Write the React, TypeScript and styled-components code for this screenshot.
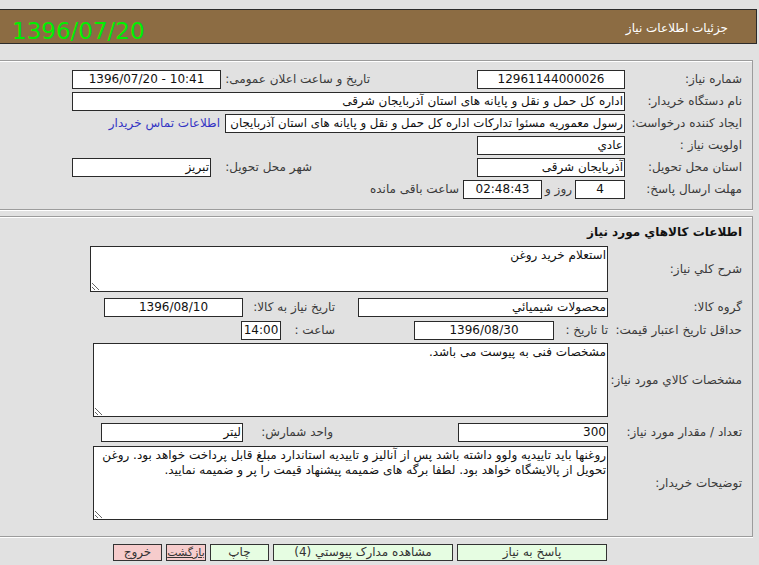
import React from "react";
import styled, { createGlobalStyle } from "styled-components";

const GlobalStyle = createGlobalStyle`
  html, body { margin: 0; padding: 0; background: #e1e1e1; }
  body {
    font-family: "DejaVu Sans", "Noto Sans", sans-serif;
    font-size: 12px;
    color: #3a3a3a;
  }
`;

const Page = styled.div`
  width: 759px;
  height: 565px;
  overflow: hidden;
  box-sizing: border-box;
  padding-top: 9px;
  display: flex;
  flex-direction: column;
`;

const Header = styled.header`
  height: 35px;
  box-sizing: border-box;
  margin-right: 2px;
  background: #8c6c43;
  border: 1px solid #2b2b2b;
  border-left: none;
  display: flex;
  direction: rtl;
  align-items: center;
  justify-content: space-between;
`;

const HeaderTitle = styled.div`
  color: #ffffff;
  font-size: 12px;
  padding-right: 28px;
  padding-top: 3px;
`;

const HeaderDate = styled.div`
  color: #00f000;
  font-size: 23px;
  padding-left: 12px;
  padding-top: 9px;
  direction: ltr;
`;

const Panel = styled.section<{ $mt: number; $pt: number; $pb: number }>`
  margin-top: ${(p) => p.$mt}px;
  margin-right: 6px;
  border: 1px solid #9c9c9c;
  border-left: none;
  box-shadow: 0 1px 0 #ffffff, inset 0 1px 0 #ffffff;
  direction: rtl;
  padding: ${(p) => p.$pt}px 10px ${(p) => p.$pb}px 0;
  display: flex;
  flex-direction: column;
`;

const Row = styled.div<{ $h: number; $mt?: number }>`
  display: flex;
  align-items: center;
  height: ${(p) => p.$h}px;
  margin-top: ${(p) => p.$mt ?? 0}px;
`;

const Label = styled.div<{ $w: number }>`
  width: ${(p) => p.$w}px;
  flex: none;
  white-space: nowrap;
  color: #3a3a3a;
`;

const Title = styled.div`
  height: 16px;
  line-height: 16px;
  font-weight: bold;
  color: #111;
  white-space: nowrap;
`;

const Field = styled.div<{ $w: number; $center?: boolean; $fs?: number }>`
  width: ${(p) => p.$w}px;
  height: 19px;
  flex: none;
  box-sizing: border-box;
  border: 1px solid #2a2a2a;
  background: #ffffff;
  color: #111;
  font-size: ${(p) => p.$fs ?? 12}px;
  line-height: 17px;
  padding: 0 1px;
  text-align: ${(p) => (p.$center ? "center" : "right")};
  direction: ${(p) => (p.$center ? "ltr" : "rtl")};
  white-space: nowrap;
  overflow: hidden;
`;

const InlineLabel = styled.span<{ $w?: number; $pr?: number; $pl?: number }>`
  ${(p) => (p.$w ? `width: ${p.$w}px;` : "")}
  padding-right: ${(p) => p.$pr ?? 0}px;
  padding-left: ${(p) => p.$pl ?? 0}px;
  box-sizing: border-box;
  flex: none;
  white-space: nowrap;
  color: #3a3a3a;
`;

const ContactLink = styled.a`
  color: #3434c4;
  text-decoration: none;
  margin-right: 5px;
  white-space: nowrap;
  cursor: pointer;
`;

const TextBox = styled.textarea<{ $w: number; $h: number }>`
  width: ${(p) => p.$w}px;
  height: ${(p) => p.$h}px;
  flex: none;
  box-sizing: border-box;
  border: 1px solid #2a2a2a;
  background: #ffffff;
  color: #111;
  font-family: "DejaVu Sans", "Noto Sans", sans-serif;
  font-size: 12px;
  line-height: 15px;
  padding: 1px 1px;
  margin: 0;
  direction: rtl;
  text-align: right;
  resize: both;
  overflow: hidden;
  outline: none;
`;

const ButtonBar = styled.div`
  display: flex;
  direction: rtl;
  gap: 4px;
  margin-top: 7px;
  padding-right: 152px;
`;

const ActionButton = styled.button<{ $tone: "green" | "pink"; $w: number; $underline?: boolean }>`
  width: ${(p) => p.$w}px;
  height: 17px;
  box-sizing: border-box;
  padding: 0;
  margin: 0;
  border: 1px solid #333;
  background: ${(p) => (p.$tone === "green" ? "#e6fde2" : "#f6cccc")};
  color: #333;
  font-family: "DejaVu Sans", "Noto Sans", sans-serif;
  font-size: ${(p) => (p.$w < 45 ? 11 : 12)}px;
  line-height: 15px;
  white-space: nowrap;
  overflow: visible;
  text-decoration: ${(p) => (p.$underline ? "underline" : "none")};
  cursor: pointer;
`;

export default function App() {
  return (
    <>
      <GlobalStyle />
      <Page>
        <Header>
          <HeaderTitle>جزئیات اطلاعات نیاز</HeaderTitle>
          <HeaderDate>1396/07/20</HeaderDate>
        </Header>

        <Panel $mt={16} $pt={7} $pb={9}>
          <Row $h={22}>
            <Label $w={117}>شماره نیاز:</Label>
            <Field $w={148} $center>12961144000026</Field>
            <InlineLabel $w={256} $pr={107}>تاریخ و ساعت اعلان عمومی:</InlineLabel>
            <Field $w={149} $center>1396/07/20 - 10:41</Field>
          </Row>
          <Row $h={22}>
            <Label $w={117}>نام دستگاه خریدار:</Label>
            <Field $w={553}>اداره کل حمل و نقل و پایانه های استان آذربایجان شرقی</Field>
          </Row>
          <Row $h={22}>
            <Label $w={117}>ایجاد کننده درخواست:</Label>
            <Field $w={400} $fs={11.75}>رسول معموریه مسئوا تدارکات اداره کل حمل و نقل و پایانه های استان آذربایجان</Field>
            <ContactLink>اطلاعات تماس خریدار</ContactLink>
          </Row>
          <Row $h={22}>
            <Label $w={117}>اولویت نیاز :</Label>
            <Field $w={148}>عادي</Field>
          </Row>
          <Row $h={22}>
            <Label $w={117}>استان محل تحویل:</Label>
            <Field $w={148}>آذربایجان شرقی</Field>
            <InlineLabel $w={266} $pr={165}>شهر محل تحویل:</InlineLabel>
            <Field $w={139}>تبریز</Field>
          </Row>
          <Row $h={22}>
            <Label $w={117}>مهلت ارسال پاسخ:</Label>
            <Field $w={50} $center>4</Field>
            <InlineLabel $pr={3} $pl={3}>روز و</InlineLabel>
            <Field $w={79} $center>02:48:43</Field>
            <InlineLabel $pr={4}>ساعت باقی مانده</InlineLabel>
          </Row>
        </Panel>

        <Panel $mt={6} $pt={7} $pb={16}>
          <Title>اطلاعات كالاهاي مورد نياز</Title>
          <Row $h={46} $mt={6}>
            <Label $w={134}>شرح كلي نياز:</Label>
            <TextBox $w={518} $h={46} readOnly value="استعلام خريد روغن" />
          </Row>
          <Row $h={24} $mt={3}>
            <Label $w={134}>گروه كالا:</Label>
            <Field $w={250}>محصولات شيميائي</Field>
            <InlineLabel $w={115} $pr={23}>تاريخ نياز به كالا:</InlineLabel>
            <Field $w={139} $center>1396/08/10</Field>
          </Row>
          <Row $h={22}>
            <Label $w={134}>حداقل تاريخ اعتبار قيمت:</Label>
            <InlineLabel $w={54}>تا تاريخ :</InlineLabel>
            <Field $w={140} $center>1396/08/30</Field>
            <InlineLabel $w={133} $pr={79}>ساعت :</InlineLabel>
            <Field $w={40} $center>14:00</Field>
          </Row>
          <Row $h={74} $mt={2}>
            <Label $w={134}>مشخصات كالاي مورد نياز:</Label>
            <TextBox $w={515} $h={74} readOnly value="مشخصات فنی به پیوست می باشد." />
          </Row>
          <Row $h={22} $mt={4}>
            <Label $w={134}>تعداد / مقدار مورد نياز:</Label>
            <Field $w={150}>300</Field>
            <InlineLabel $w={215} $pr={125}>واحد شمارش:</InlineLabel>
            <Field $w={142}>لیتر</Field>
          </Row>
          <Row $h={74} $mt={3}>
            <Label $w={134}>توضیحات خریدار:</Label>
            <TextBox
              $w={515}
              $h={74}
              readOnly
              value="روغنها باید تاییدیه ولوو داشته باشد پس از آنالیز و تاییدیه استاندارد مبلغ قابل پرداخت خواهد بود. روغن تحویل از پالایشگاه خواهد بود. لطفا برگه های ضمیمه پیشنهاد قیمت را پر و ضمیمه نمایید."
            />
          </Row>
        </Panel>

        <ButtonBar>
          <ActionButton $tone="green" $w={150}>پاسخ به نياز</ActionButton>
          <ActionButton $tone="green" $w={180}>مشاهده مدارک پيوستي (4)</ActionButton>
          <ActionButton $tone="green" $w={59}>چاپ</ActionButton>
          <ActionButton $tone="pink" $w={40} $underline>بازگشت</ActionButton>
          <ActionButton $tone="pink" $w={49}>خروج</ActionButton>
        </ButtonBar>
      </Page>
    </>
  );
}
